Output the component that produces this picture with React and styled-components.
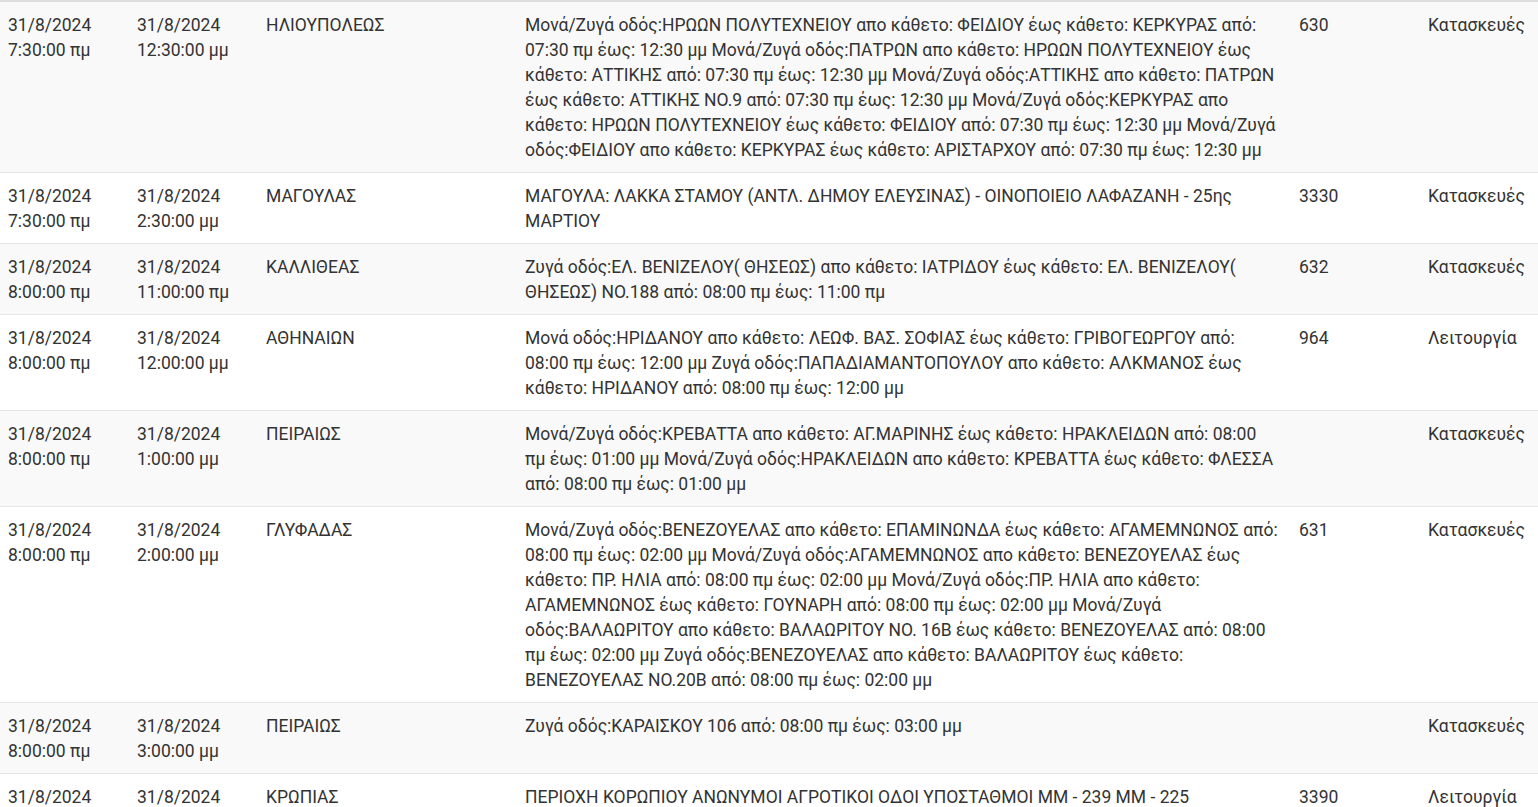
import React from "react";
import styled, { createGlobalStyle } from "styled-components";

const GlobalStyle = createGlobalStyle`
  html, body {
    margin: 0;
    padding: 0;
    overflow: hidden;
    background: #fff;
  }
  body {
    font-family: Roboto, "Noto Sans", "DejaVu Sans", sans-serif;
    color: #333;
  }
`;

const Table = styled.table`
  width: 1538px;
  table-layout: fixed;
  border-collapse: collapse;
  border-spacing: 0;
  font-size: 17.5px;
  line-height: 25px;
  border-top: 2px solid #ddd;
`;

const Col = styled.col`
  width: ${(p) => (p.$w ? `${p.$w}px` : "auto")};
`;

const Row = styled.tr`
  background: ${(p) => (p.$odd ? "#f9f9f9" : "#fff")};
`;

const Cell = styled.td`
  padding: 11px ${(p) => (p.$wide ? "12px" : "8px")} 9px 8px;
  vertical-align: top;
  border-top: 1px solid #e6e6e6;
  text-align: left;

  tr:first-child > & {
    border-top: 0;
  }
`;

const rows = [
  {
    from: ["31/8/2024", "7:30:00 πμ"],
    to: ["31/8/2024", "12:30:00 μμ"],
    area: "ΗΛΙΟΥΠΟΛΕΩΣ",
    desc:
      "Μονά/Ζυγά οδός:ΗΡΩΩΝ ΠΟΛΥΤΕΧΝΕΙΟΥ απο κάθετο: ΦΕΙΔΙΟΥ έως κάθετο: ΚΕΡΚΥΡΑΣ από: 07:30 πμ έως: 12:30 μμ Μονά/Ζυγά οδός:ΠΑΤΡΩΝ απο κάθετο: ΗΡΩΩΝ ΠΟΛΥΤΕΧΝΕΙΟΥ έως κάθετο: ΑΤΤΙΚΗΣ από: 07:30 πμ έως: 12:30 μμ Μονά/Ζυγά οδός:ΑΤΤΙΚΗΣ απο κάθετο: ΠΑΤΡΩΝ έως κάθετο: ΑΤΤΙΚΗΣ ΝΟ.9 από: 07:30 πμ έως: 12:30 μμ Μονά/Ζυγά οδός:ΚΕΡΚΥΡΑΣ απο κάθετο: ΗΡΩΩΝ ΠΟΛΥΤΕΧΝΕΙΟΥ έως κάθετο: ΦΕΙΔΙΟΥ από: 07:30 πμ έως: 12:30 μμ Μονά/Ζυγά οδός:ΦΕΙΔΙΟΥ απο κάθετο: ΚΕΡΚΥΡΑΣ έως κάθετο: ΑΡΙΣΤΑΡΧΟΥ από: 07:30 πμ έως: 12:30 μμ",
    code: "630",
    type: "Κατασκευές",
  },
  {
    from: ["31/8/2024", "7:30:00 πμ"],
    to: ["31/8/2024", "2:30:00 μμ"],
    area: "ΜΑΓΟΥΛΑΣ",
    desc: "ΜΑΓΟΥΛΑ: ΛΑΚΚΑ ΣΤΑΜΟΥ (ΑΝΤΛ. ΔΗΜΟΥ ΕΛΕΥΣΙΝΑΣ) - ΟΙΝΟΠΟΙΕΙΟ ΛΑΦΑΖΑΝΗ - 25ης ΜΑΡΤΙΟΥ",
    code: "3330",
    type: "Κατασκευές",
  },
  {
    from: ["31/8/2024", "8:00:00 πμ"],
    to: ["31/8/2024", "11:00:00 πμ"],
    area: "ΚΑΛΛΙΘΕΑΣ",
    desc: "Ζυγά οδός:ΕΛ. ΒΕΝΙΖΕΛΟΥ( ΘΗΣΕΩΣ) απο κάθετο: ΙΑΤΡΙΔΟΥ έως κάθετο: ΕΛ. ΒΕΝΙΖΕΛΟΥ( ΘΗΣΕΩΣ) ΝΟ.188 από: 08:00 πμ έως: 11:00 πμ",
    code: "632",
    type: "Κατασκευές",
  },
  {
    from: ["31/8/2024", "8:00:00 πμ"],
    to: ["31/8/2024", "12:00:00 μμ"],
    area: "ΑΘΗΝΑΙΩΝ",
    desc: "Μονά οδός:ΗΡΙΔΑΝΟΥ απο κάθετο: ΛΕΩΦ. ΒΑΣ. ΣΟΦΙΑΣ έως κάθετο: ΓΡΙΒΟΓΕΩΡΓΟΥ από: 08:00 πμ έως: 12:00 μμ Ζυγά οδός:ΠΑΠΑΔΙΑΜΑΝΤΟΠΟΥΛΟΥ απο κάθετο: ΑΛΚΜΑΝΟΣ έως κάθετο: ΗΡΙΔΑΝΟΥ από: 08:00 πμ έως: 12:00 μμ",
    code: "964",
    type: "Λειτουργία",
  },
  {
    from: ["31/8/2024", "8:00:00 πμ"],
    to: ["31/8/2024", "1:00:00 μμ"],
    area: "ΠΕΙΡΑΙΩΣ",
    desc: "Μονά/Ζυγά οδός:ΚΡΕΒΑΤΤΑ απο κάθετο: ΑΓ.ΜΑΡΙΝΗΣ έως κάθετο: ΗΡΑΚΛΕΙΔΩΝ από: 08:00 πμ έως: 01:00 μμ Μονά/Ζυγά οδός:ΗΡΑΚΛΕΙΔΩΝ απο κάθετο: ΚΡΕΒΑΤΤΑ έως κάθετο: ΦΛΕΣΣΑ από: 08:00 πμ έως: 01:00 μμ",
    code: "",
    type: "Κατασκευές",
  },
  {
    from: ["31/8/2024", "8:00:00 πμ"],
    to: ["31/8/2024", "2:00:00 μμ"],
    area: "ΓΛΥΦΑΔΑΣ",
    desc: "Μονά/Ζυγά οδός:ΒΕΝΕΖΟΥΕΛΑΣ απο κάθετο: ΕΠΑΜΙΝΩΝΔΑ έως κάθετο: ΑΓΑΜΕΜΝΩΝΟΣ από: 08:00 πμ έως: 02:00 μμ Μονά/Ζυγά οδός:ΑΓΑΜΕΜΝΩΝΟΣ απο κάθετο: ΒΕΝΕΖΟΥΕΛΑΣ έως κάθετο: ΠΡ. ΗΛΙΑ από: 08:00 πμ έως: 02:00 μμ Μονά/Ζυγά οδός:ΠΡ. ΗΛΙΑ απο κάθετο: ΑΓΑΜΕΜΝΩΝΟΣ έως κάθετο: ΓΟΥΝΑΡΗ από: 08:00 πμ έως: 02:00 μμ Μονά/Ζυγά οδός:ΒΑΛΑΩΡΙΤΟΥ απο κάθετο: ΒΑΛΑΩΡΙΤΟΥ ΝΟ. 16Β έως κάθετο: ΒΕΝΕΖΟΥΕΛΑΣ από: 08:00 πμ έως: 02:00 μμ Ζυγά οδός:ΒΕΝΕΖΟΥΕΛΑΣ απο κάθετο: ΒΑΛΑΩΡΙΤΟΥ έως κάθετο: ΒΕΝΕΖΟΥΕΛΑΣ ΝΟ.20Β από: 08:00 πμ έως: 02:00 μμ",
    code: "631",
    type: "Κατασκευές",
  },
  {
    from: ["31/8/2024", "8:00:00 πμ"],
    to: ["31/8/2024", "3:00:00 μμ"],
    area: "ΠΕΙΡΑΙΩΣ",
    desc: "Ζυγά οδός:ΚΑΡΑΙΣΚΟΥ 106 από: 08:00 πμ έως: 03:00 μμ",
    code: "",
    type: "Κατασκευές",
  },
  {
    from: ["31/8/2024", "8:00:00 πμ"],
    to: ["31/8/2024", "4:00:00 μμ"],
    area: "ΚΡΩΠΙΑΣ",
    desc: "ΠΕΡΙΟΧΗ ΚΟΡΩΠΙΟΥ ΑΝΩΝΥΜΟΙ ΑΓΡΟΤΙΚΟΙ ΟΔΟΙ ΥΠΟΣΤΑΘΜΟΙ ΜΜ - 239 ΜΜ - 225",
    code: "3390",
    type: "Λειτουργία",
  },
];

const DateTime = ({ parts }) => (
  <>
    {parts[0]}
    <br />
    {parts[1]}
  </>
);

export default function App() {
  return (
    <>
      <GlobalStyle />
      <Table>
        <colgroup>
          <Col $w={129} />
          <Col $w={129} />
          <Col $w={259} />
          <Col $w={774} />
          <Col $w={129} />
          <Col />
        </colgroup>
        <tbody>
          {rows.map((r, i) => (
            <Row key={i} $odd={i % 2 === 0}>
              <Cell>
                <DateTime parts={r.from} />
              </Cell>
              <Cell>
                <DateTime parts={r.to} />
              </Cell>
              <Cell>{r.area}</Cell>
              <Cell $wide>{r.desc}</Cell>
              <Cell>{r.code}</Cell>
              <Cell>{r.type}</Cell>
            </Row>
          ))}
        </tbody>
      </Table>
    </>
  );
}
